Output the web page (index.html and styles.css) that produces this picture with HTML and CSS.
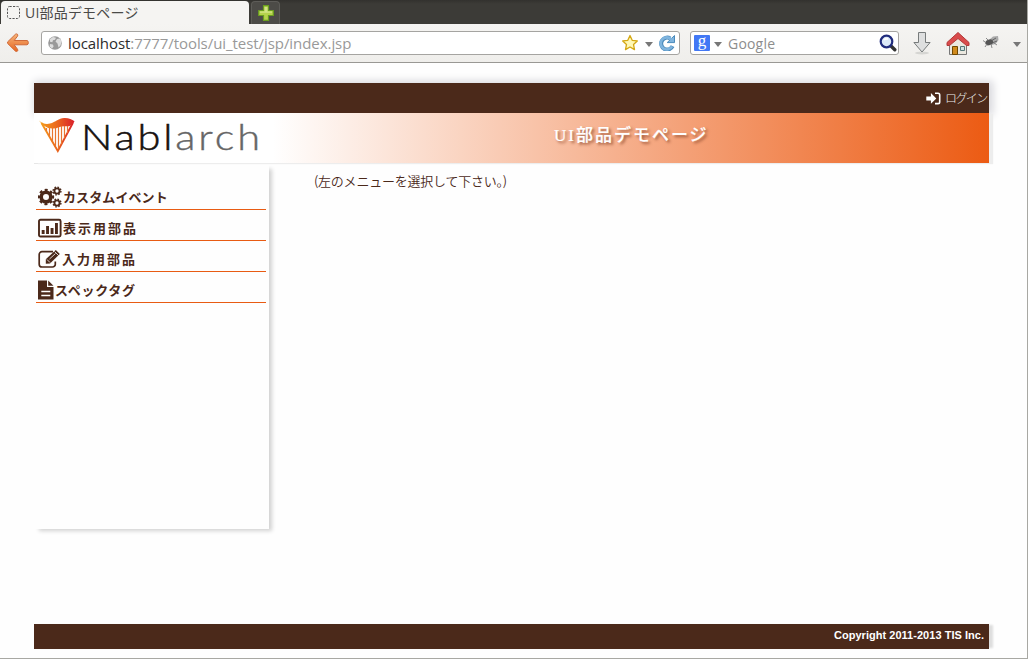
FILE: index.html
```html
<!DOCTYPE html>
<html lang="ja">
<head>
<meta charset="utf-8">
<title>UI部品デモページ</title>
<link rel="stylesheet" href="styles.css">
</head>
<body>
<div class="window">
  <div class="tabs">
    <div class="tab"><svg width="15" height="15" viewBox="0 0 15 15"><rect x="1.5" y="1.5" width="12" height="12" rx="2" fill="none" stroke="#555" stroke-dasharray="2.2 1.3"/></svg><span class="tab-title">UI部品デモページ</span></div>
    <div class="newtab"><svg width="16" height="16" viewBox="0 0 16 16"><path d="M5.5.7h5v4.8h4.8v5h-4.8v4.8h-5v-4.8H.7v-5h4.8z" fill="#b5d24c" stroke="#6a9e1f" stroke-width="1.2"/><path d="M6.6 2h2.8v4.6H14v1.2H2V6.6h4.6z" fill="#d2e487"/></svg></div>
  </div>
  <div class="toolbar">
    <svg class="back" width="24" height="20" viewBox="0 0 24 20"><defs><linearGradient id="bk" x1="0" y1="0" x2="0" y2="1"><stop offset="0" stop-color="#f5b57c"/><stop offset="1" stop-color="#e8661f"/></linearGradient></defs><path d="M9.5 1.2c1.5-1 3 .5 2 2L8.2 7.5H21c1.8 0 1.8 4.3 0 4.3H8.2l3.3 4.4c1 1.5-.5 3-2 2L1.6 10.4v-1.5z" fill="url(#bk)" stroke="#cf6a3a"/></svg>
    <div class="url">
      <svg width="14" height="14" viewBox="0 0 14 14"><circle cx="7" cy="7" r="6.8" fill="#999"/><path d="M2 3l3-2 3 .7-1 2-2 .6-.7 2L2 5.8zM9 3l3-.6 1.5 3-1 4-2 2-1-4-2-2zM2 8l3 .6.6 2-1.5 2-2.5-2z" fill="#ddd"/></svg>
      <span class="address"><b>localhost</b>:7777/tools/ui_test/jsp/index.jsp</span>
      <svg class="star" width="18" height="18" viewBox="0 0 18 18"><path d="M9 1.5l2.2 4.8 5.1.6-3.8 3.5 1 5.2L9 13l-4.5 2.6 1-5.2L1.7 6.9l5.1-.6z" fill="#fff8b5" stroke="#d5a814" stroke-width="1.3" stroke-linejoin="round"/></svg>
      <i class="caret"></i>
      <svg class="reload" width="16" height="16" viewBox="0 0 16 16"><path d="M13.6 11.2A6 6 0 1 1 11.2 3.4" fill="none" stroke="#4a8abb" stroke-width="4"/><path d="M8.2 7.6h7.3V.5z" fill="#7fb4de" stroke="#4a8abb"/><path d="M13 11.3A6 6 0 1 1 12.2 4.4" fill="none" stroke="#7fb4de" stroke-width="2.6"/></svg>
    </div>
    <div class="search">
      <div class="google">g</div><i class="caret"></i><span class="placeholder">Google</span>
      <svg width="18" height="18" viewBox="0 0 18 18"><path d="M12 12l3.8 3.8" stroke="#333" stroke-width="3.4" stroke-linecap="round"/><circle cx="7.5" cy="7.5" r="5.8" fill="#dce9f8" stroke="#202c7d" stroke-width="2.2"/><path d="M5 6q1.5-2 4-1" stroke="#fff" stroke-width="2" fill="none"/></svg>
    </div>
    <svg class="download" width="20" height="24" viewBox="0 0 20 24"><ellipse cx="10" cy="22" rx="7" ry="1.5" fill="#d5d5d2"/><path d="M6.5 1.5h7v10h4.6L10 21 1.9 11.5h4.6z" fill="#dedfdf" stroke="#777b7b" stroke-linejoin="round"/></svg>
    <svg class="home" width="24" height="25" viewBox="0 0 24 25"><path d="M3.5 11L12 5l8.500 6v12.500h-17z" fill="#ebe8df" stroke="#777"/><path d="M6.500 15.500h5v8h-5z" fill="#d08a1c" stroke="#704800"/><path d="M14.500 15.500h4v4h-4z" fill="#cfe0e0" stroke="#577"/><path d="M12 1.500L23 11.500v3h-2.500L12 7.500 3.500 14.500H1v-3z" fill="#d94b4b" stroke="#b23a3a"/></svg>
    <svg class="fly" width="18" height="16" viewBox="0 0 18 16"><path d="M6 5l4-3.500 5-.5.500 4-3 4-4 1z" fill="#aaa"/><path d="M8 6l5-3M9 8l5-2" stroke="#666"/><ellipse cx="6" cy="7.500" rx="4" ry="2.800" transform="rotate(-20 6 7)" fill="#555"/><path d="M2 7L0 5.500M4 9l-2 3M8 9l1 4M11 8l3 2M5 5L3 3" stroke="#888"/></svg>
    <i class="caret end"></i>
  </div>
  <div class="page">
    <header class="header">
      <div class="topbar"><svg width="15" height="13" viewBox="0 0 15 13"><path d="M.3 4.4h4.600V1l5.400 5.400-5.400 5.400V8.400H.3z" fill="#fff"/><path d="M9 1.200h3a1.700 1.700 0 0 1 1.700 1.700v7a1.700 1.700 0 0 1-1.700 1.700H9" fill="none" stroke="#fff" stroke-width="1.6"/></svg><span>ログイン</span></div>
      <div class="banner">
        <svg class="logo" width="240" height="50" viewBox="0 0 240 50"><defs><linearGradient id="harp" x1="5" y1="0" x2="41" y2="0" gradientUnits="userSpaceOnUse"><stop offset="0" stop-color="#f6a21b"/><stop offset=".5" stop-color="#ea681e"/><stop offset="1" stop-color="#d91d2a"/></linearGradient></defs><path d="M5 7.500c3 3 7 4 11 3 6-1.500 9-6 15-5.500 4 0 7 1.500 9.500 3.300-1.500 3.700-4.500 5.500-8.500 5-5-.8-8 2-12.500 2.200C13 16 8 12 5 7.500z" fill="url(#harp)"/><path d="M7.500 10l16.300 28L38.800 10" fill="none" stroke="url(#harp)" stroke-width="1.9"/><path d="M12.500 15v3M15.500 15v8M18.500 15v13M21.500 15v18M24.500 14v22M27.500 13v18M30.500 13v12M33.500 13v7" stroke="#e9762f" stroke-width="1.200"/>
        <text class="wordmark" x="47" y="37" textLength="182" lengthAdjust="spacingAndGlyphs"><tspan class="dark">Nabl</tspan><tspan class="gray">arch</tspan></text></svg>
        <h1>UI部品デモページ</h1>
      </div>
    </header>
    <div class="body">
      <nav class="menu">
        <a><svg width="25" height="22" viewBox="0 0 25 22"><g fill="none" stroke="#4b291a"><circle cx="8" cy="11" r="4.800" stroke-width="3.600"/><circle cx="8" cy="11" r="7" stroke-width="2.300" stroke-dasharray="2.900 2.598" transform="rotate(-12 8 11)"/><circle cx="19" cy="5" r="2.600" stroke-width="1.900"/><circle cx="19" cy="5" r="3.900" stroke-width="1.400" stroke-dasharray="1.600 1.463"/><circle cx="19" cy="17" r="2.600" stroke-width="1.900"/><circle cx="19" cy="17" r="3.900" stroke-width="1.400" stroke-dasharray="1.600 1.463"/></g></svg><span>カスタムイベント</span></a>
        <a><svg width="25" height="20" viewBox="0 0 25 20"><rect x="1" y="1.800" width="21.600" height="16.700" rx="1.500" fill="none" stroke="#4b291a" stroke-width="1.900"/><path d="M3.700 12h2.900v4H3.700zm4.400-4H11v8H8.100zm4.500 2h2.900v6h-2.900zm4.400-5h2.900v11H17z" fill="#4b291a"/></svg><span class="kanji">表示用部品</span></a>
        <a><svg width="24" height="20" viewBox="0 0 24 20"><path d="M15 2.700H4A2.800 2.800 0 0 0 1.200 5.500v9.700A2.800 2.800 0 0 0 4 18h10.500a2.800 2.800 0 0 0 2.800-2.800V12.500" fill="none" stroke="#4b291a" stroke-width="1.700"/><path d="M7.800 10.200L17.800 1l4 4L12 14.500l-4.200.2z" fill="#4b291a"/><path d="M9 10.500l3 3M11.500 10l6-5.500M16.500 2.500l4 4" stroke="#fff" stroke-width=".800"/></svg><span class="kanji">入力用部品</span></a>
        <a><svg width="17" height="20" viewBox="0 0 17 20"><path d="M0 .5h9V7h6.500v12.500H0zM10.200.5l5.300 5.300h-5.300z" fill="#4b291a"/><path d="M3.300 11.500h9M3.300 15.500h9" stroke="#fff" stroke-width="1.600"/></svg><span class="tag">スペックタグ</span></a>
      </nav>
      <main class="content"><span class="message">(左のメニューを選択して下さい。)</span></main>
    </div>
    <footer class="footer">Copyright 2011-2013 TIS Inc.</footer>
  </div>
</div>
</body>
</html>
```
FILE: styles.css
```css
* { box-sizing: border-box; }
body { margin: 0; background: #fefefe; }
svg { display: block; flex: none; }
.window { width: 1028px; height: 659px; display: flex; flex-direction: column; border-right: 1px solid #a8a8a3; border-bottom: 1px solid #a8a8a3; overflow: hidden; font-family: "Liberation Sans", "Noto Sans CJK JP", sans-serif; }
.tabs { height: 24px; flex: none; display: flex; background: linear-gradient(#32312e, #3c3b37 4px); }
.tab { width: 248px; margin: 1px 0 0 1px; padding: 0 5px; display: flex; align-items: center; gap: 4px; background: #f5f4f2; border-radius: 4px 4px 0 0; color: #4a4a48; }
.tab-title { font: 14px/22px "Open Sans", "Noto Sans CJK JP", sans-serif; letter-spacing: .2px; white-space: nowrap; }
.newtab { width: 29px; margin: 1px 0 0 2px; display: flex; align-items: center; justify-content: center; background: #4c4b47; border: 1px solid #5d5c58; border-bottom: 0; border-radius: 4px 4px 0 0; }
.toolbar { height: 39px; flex: none; display: flex; align-items: center; background: linear-gradient(#f5f4f2, #efeeeb); border-bottom: 1px solid #999894; }
.back { margin-left: 6px; }
.url, .search { height: 24px; display: flex; align-items: center; background: #fff; border: 1px solid #a5a4a1; border-radius: 3px; }
.url { width: 639px; margin-left: 11px; padding: 0 4px 0 6px; }
.address { flex: 1; margin-left: 6px; font: 15px/22px "Open Sans", sans-serif; letter-spacing: -.06px; color: #999; white-space: nowrap; }
.address b { font-weight: 400; color: #2c2c2c; }
.caret { width: 0; height: 0; border: 4px solid transparent; border-top: 5px solid #777; border-bottom: 0; margin: 2px 0 0 6px; }
.reload { margin-left: 6px; }
.search { width: 209px; margin-left: 10px; padding: 0 1px 0 3px; }
.google { width: 16px; height: 16px; background: #4278f5; color: white; font: 17px/12px "Liberation Serif", serif; text-align: center; border-radius: 1px; }
.search .caret { margin-left: 4px; }
.placeholder { flex: 1; margin: 1px 0 0 6px; color: #8d8d8d; font: 14px/22px "Open Sans", sans-serif; letter-spacing: .2px; }
.download { margin-left: 13px; }
.home { margin-left: 14px; }
.fly { margin-left: 13px; }
.caret.end { margin-left: 12px; }
.page { flex: 1; display: flex; flex-direction: column; padding: 20px 38px 9px 34px; }
.header { height: 80px; flex: none; display: flex; flex-direction: column; }
.topbar { height: 30px; display: flex; align-items: center; justify-content: flex-end; gap: 4px; padding-right: 2px; background: #4b291a; box-shadow: 2px 0 8px 2px #d7d7dc; color: #eee; font: 300 12px/30px "Noto Sans CJK JP", sans-serif; }
.topbar span { width: 42px; letter-spacing: -1.6px; white-space: nowrap; }
.banner { height: 50px; flex: none; position: relative; display: flex; background: linear-gradient(90deg, #fff 25%, #ec5b13 100%); box-shadow: 4px 1px 1px #ededed, 0 1px 0 #e6e6e6; }
.logo { width: 240px; }
.wordmark { font: 300 36px "Lato", sans-serif; letter-spacing: 2.5px; }
.dark { fill: #17110f; stroke: #17110f; stroke-width: .5px; }
.gray { fill: #666; stroke: #666; stroke-width: .4px; }
h1 { margin: 0 0 0 280px; color: #fff; font: 500 17px/46px "Liberation Serif", "Noto Sans CJK JP", serif; letter-spacing: 2px; text-shadow: 2px 2px 3px #9c5638; -webkit-text-stroke: .2px #fff; white-space: nowrap; }
.body { flex: 1; display: flex; }
.menu { width: 235px; height: 364px; margin-top: 2px; padding: 17px 3px 0 2px; box-shadow: 4px 3px 4px -1px #d2d2d2; }
.menu a { height: 28px; margin-bottom: 3px; display: flex; align-items: center; padding: 2px 0 0 2px; border-bottom: 1px solid #e85b13; color: #4b291a; font: 600 13px/24px "Noto Sans CJK JP", sans-serif; letter-spacing: .1px; white-space: nowrap; }
.kanji { letter-spacing: 2px; }
.tag { letter-spacing: .7px; }
.content { margin: 7px 0 0 45px; color: #4b291a; font: 350 13px/22px "Noto Sans CJK JP", sans-serif; letter-spacing: -.23px; white-space: nowrap; }
.footer { height: 25px; flex: none; padding: 0 5px; background: #4b291a; box-shadow: 5px 0 2px -1px #dedede; color: #fff; text-align: right; font: bold 11px/23px "Liberation Sans", sans-serif; letter-spacing: .03px; }
```
